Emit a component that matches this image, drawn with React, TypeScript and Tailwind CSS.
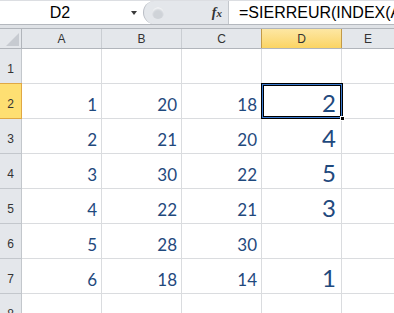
const cols = ["A", "B", "C", "D", "E"];

const rows: (string | number)[][] = [
  ["", "", "", ""],
  [1, 20, 18, 2],
  [2, 21, 20, 4],
  [3, 30, 22, 5],
  [4, 22, 21, 3],
  [5, 28, 30, ""],
  [6, 18, 14, 1],
  ["", "", "", ""],
];

const cell = "relative h-[35px] w-[80px] shrink-0 border-r border-b border-[#dadcdf]";

export default function App() {
  return (
    <div className="h-[313px] w-[394px] overflow-hidden bg-white font-['Liberation_Sans',sans-serif]">
      {/* formula bar */}
      <div className="flex h-[25px] border-t border-b border-t-[#dcdee2] border-b-[#b4b8be] bg-white">
        <div className="flex w-[143px] shrink-0 items-center">
          <div className="w-[120px] text-center text-[16px] leading-none text-black">D2</div>
          <div className="ml-[11px] h-0 w-0 border-x-[3px] border-t-[4px] border-x-transparent border-t-[#3a3a3a]" />
        </div>
        <div className="flex w-[85px] shrink-0 items-center rounded-l-full border-l border-[#b9bdc4] bg-[#e4e7eb] pl-[8px]">
          <div className="h-[12px] w-[12px] rounded-full bg-[#cfd3d8] shadow-[inset_0_2px_2px_#f4f5f7]" />
          <span className="ml-auto mr-[6px] font-['Liberation_Serif',serif] text-[14px] font-bold italic leading-none text-[#333]">
            f<span className="text-[11px]">x</span>
          </span>
        </div>
        <div className="flex flex-1 items-center overflow-hidden whitespace-nowrap border-l border-[#c3c7cc] pl-[10px] text-[16px] leading-none text-black">
          =SIERREUR(INDEX(A
        </div>
      </div>
      <div className="h-[3px] bg-[#dfe2e6]" />

      {/* column headers */}
      <div className="flex h-[21px] border-t border-b border-[#b1b5bb] bg-[#e4e7eb] text-[12px] text-[#333]">
        <div className="relative w-[22px] shrink-0 border-r border-[#b1b5bb]">
          <div className="absolute bottom-[2px] right-[2px] h-[13px] w-[13px] bg-[#c7cbd1] [clip-path:polygon(100%_0,100%_100%,0_100%)]" />
        </div>
        {cols.map((c) => (
          <div
            key={c}
            className={
              c === "D"
                ? "-ml-px flex w-[81px] shrink-0 items-center justify-center border-x border-[#c29a48] bg-gradient-to-b from-[#fde7a3] to-[#fbd462]"
                : c === "E"
                ? "flex flex-1 items-center justify-center"
                : "flex w-[80px] shrink-0 items-center justify-center border-r border-[#c9cdd2]"
            }
          >
            {c}
          </div>
        ))}
      </div>

      {/* grid */}
      <div className="relative">
        {rows.map((r, i) => (
          <div key={i} className="flex">
            <div
              className={
                i === 1
                  ? "-mt-px flex h-[36px] w-[22px] shrink-0 items-end justify-center border-y border-r border-[#e0a844] bg-[#fedf72] pb-[5px] text-[12px] text-[#333]"
                  : "flex h-[35px] w-[22px] shrink-0 items-end justify-center border-r border-b border-[#c3c7cc] bg-[#e4e7eb] pb-[5px] text-[12px] text-[#333]"
              }
            >
              {i + 1}
            </div>
            {r.map((v, j) => (
              <div key={j} className={cell}>
                <span
                  className={
                    j === 3
                      ? "absolute bottom-[3px] right-[5px] font-['Lato',sans-serif] text-[24px] leading-none text-[#1f497d]"
                      : "absolute bottom-[5px] right-[4px] font-['Lato',sans-serif] text-[17px] leading-none text-[#1f497d]"
                  }
                >
                  {v}
                </span>
              </div>
            ))}
            <div className="h-[35px] flex-1 border-b border-[#dadcdf]" />
          </div>
        ))}
        {/* selected cell D2 */}
        <div className="absolute left-[261px] top-[34px] h-[36px] w-[82px] border border-black shadow-[inset_0_0_0_1px_#3b7bd0,inset_0_0_0_2px_#000]">
          <div className="absolute -bottom-[3px] -right-[3px] h-[5px] w-[5px] border border-white bg-black" />
        </div>
      </div>
    </div>
  );
}
